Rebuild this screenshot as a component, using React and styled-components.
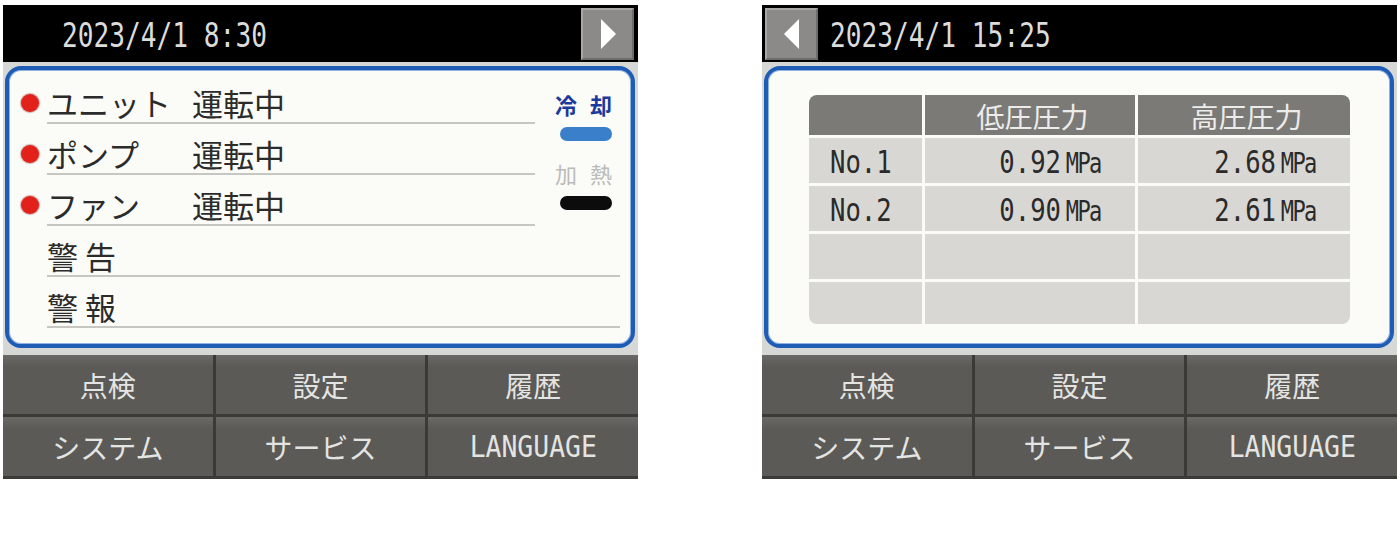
import React from "react";
import styled, { createGlobalStyle } from "styled-components";

const JP = `"Noto Sans CJK JP", "Noto Sans", sans-serif`;
const MONO = `"DejaVu Sans Mono", "Liberation Mono", monospace`;

const GlobalStyle = createGlobalStyle`
  body {
    margin: 0;
    background: #ffffff;
    font-family: ${JP};
  }
`;

const STATUS = [
  { name: "ユニット", state: "運転中" },
  { name: "ポンプ", state: "運転中" },
  { name: "ファン", state: "運転中" },
];

const ALERTS = ["警 告", "警 報"];

const PRESSURES = [
  { no: "No.1", low: "0.92", high: "2.68" },
  { no: "No.2", low: "0.90", high: "2.61" },
  null,
  null,
];

const MENU = ["点検", "設定", "履歴", "システム", "サービス"];

const Mono = ({ children, size = 34, scale = 0.77, origin = "left center" }) => (
  <MonoText $size={size} $scale={scale} $origin={origin}>
    {children}
  </MonoText>
);

const NavArrow = ({ dir }) => (
  <NavButton>
    <svg width="20" height="32" viewBox="0 0 20 32">
      {dir === "right" ? (
        <polygon points="3,1 18,16 3,31" fill="#ffffff" />
      ) : (
        <polygon points="17,1 2,16 17,31" fill="#ffffff" />
      )}
    </svg>
  </NavButton>
);

const Pressure = ({ value }) => (
  <Mono size={32} scale={0.8} origin="right center">
    {value}
    <Unit>MPa</Unit>
  </Mono>
);

const MenuGrid = () => (
  <Menu>
    {MENU.map((label) => (
      <MenuButton key={label}>{label}</MenuButton>
    ))}
    <MenuButton>
      <Mono size={30} scale={0.88} origin="center">
        LANGUAGE
      </Mono>
    </MenuButton>
  </Menu>
);

const StatusScreen = () => (
  <Screen>
    <TopBar>
      <DateSlot $pad={59}>
        <Mono>2023/4/1 8:30</Mono>
      </DateSlot>
      <NavArrow dir="right" />
    </TopBar>
    <Panel>
      <StatusGrid>
        {STATUS.map((row) => (
          <ListRow key={row.name}>
            <Dot />
            <Label>
              <Name>{row.name}</Name>
              <span>{row.state}</span>
            </Label>
          </ListRow>
        ))}
        <ModeColumn>
          <ModeLabel $active>
            <span>冷</span>
            <span>却</span>
          </ModeLabel>
          <Pill $color="#3a7fc9" $top={11} />
          <ModeLabel>
            <span>加</span>
            <span>熱</span>
          </ModeLabel>
          <Pill $color="#0c0c0c" $top={11} />
        </ModeColumn>
        {ALERTS.map((label) => (
          <AlertRow key={label}>
            <Label>{label}</Label>
          </AlertRow>
        ))}
      </StatusGrid>
    </Panel>
    <MenuGrid />
  </Screen>
);

const PressureScreen = () => (
  <Screen>
    <TopBar>
      <NavArrow dir="left" />
      <DateSlot $pad={8}>
        <Mono>2023/4/1 15:25</Mono>
      </DateSlot>
    </TopBar>
    <Panel>
      <Table>
        <HeadCell />
        <HeadCell>低圧圧力</HeadCell>
        <HeadCell>高圧圧力</HeadCell>
        {PRESSURES.map((row, i) => (
          <React.Fragment key={i}>
            <Cell $align="left">
              {row && (
                <Mono size={32} scale={0.8}>
                  {row.no}
                </Mono>
              )}
            </Cell>
            <Cell $align="right">{row && <Pressure value={row.low} />}</Cell>
            <Cell $align="right">{row && <Pressure value={row.high} />}</Cell>
          </React.Fragment>
        ))}
      </Table>
    </Panel>
    <MenuGrid />
  </Screen>
);

const App = () => (
  <>
    <GlobalStyle />
    <Page>
      <StatusScreen />
      <PressureScreen />
    </Page>
  </>
);

const Page = styled.div`
  display: flex;
  gap: 124px;
  padding: 5px 0 0 3px;
`;

const Screen = styled.div`
  width: 635px;
  display: flex;
  flex-direction: column;
  background: #d6d8d6;
`;

const TopBar = styled.div`
  height: 57px;
  display: flex;
  align-items: center;
  background: #000000;
`;

const DateSlot = styled.div`
  flex: 1;
  padding-left: ${(p) => p.$pad}px;
  color: #dcdcdc;
  line-height: 1;
  padding-top: 2px;
`;

const MonoText = styled.span`
  display: inline-block;
  font-family: ${MONO};
  font-size: ${(p) => p.$size}px;
  line-height: 1;
  white-space: pre;
  transform: scaleX(${(p) => p.$scale});
  transform-origin: ${(p) => p.$origin};
`;

const Unit = styled.span`
  margin-left: 6px;
  font-size: 0.86em;
  letter-spacing: -2px;
`;

const NavButton = styled.div`
  width: 53px;
  height: 52px;
  margin: 1px 4px 0 3px;
  box-sizing: border-box;
  display: flex;
  align-items: center;
  justify-content: center;
  background: #8b8a88;
  border: 2px solid #a9a8a5;
  border-right-color: #6e6d6b;
  border-bottom-color: #6e6d6b;
`;

const Panel = styled.div`
  height: 282px;
  box-sizing: border-box;
  margin: 4px 3px 0 2px;
  border: 4px solid #1f5cb6;
  border-radius: 16px;
  background: #fbfbf7;
  box-shadow: inset 0 0 0 1px #8fb2e2;
`;

const StatusGrid = styled.div`
  display: grid;
  grid-template-columns: 515px 85px;
  padding: 3px 11px 0 11px;
`;

const ListRow = styled.div`
  grid-column: 1;
  display: grid;
  grid-template-columns: 27px 1fr;
`;

const AlertRow = styled(ListRow)`
  grid-column: 1 / span 2;
  & > * {
    grid-column: 2;
  }
`;

const Dot = styled.div`
  width: 18px;
  height: 18px;
  margin-top: 21px;
  margin-left: 1px;
  border-radius: 50%;
  background: #e3211b;
  box-shadow: 0 0 1px 1px rgba(120, 30, 20, 0.35);
`;

const Label = styled.div`
  display: flex;
  height: 51px;
  box-sizing: border-box;
  padding-top: 12px;
  line-height: 36px;
  font-size: 31px;
  color: #2b2b2b;
  white-space: pre;
  border-bottom: 2px solid #c6c6c2;
`;

const Name = styled.span`
  width: 145px;
`;

const ModeColumn = styled.div`
  grid-column: 2;
  grid-row: 1 / span 3;
  display: flex;
  flex-direction: column;
  align-items: flex-end;
  padding: 19px 8px 0 0;
`;

const ModeLabel = styled.div`
  width: 57px;
  margin-top: ${(p) => (p.$active ? 0 : 20)}px;
  display: flex;
  justify-content: space-between;
  font-size: 22px;
  line-height: 24px;
  font-weight: ${(p) => (p.$active ? 700 : 400)};
  color: ${(p) => (p.$active ? "#1c3a9b" : "#bbbbb8")};
`;

const Pill = styled.div`
  width: 52px;
  height: 14px;
  margin-top: ${(p) => p.$top}px;
  border-radius: 7px;
  background: ${(p) => p.$color};
`;

const Table = styled.div`
  display: grid;
  grid-template-columns: 113px 210px 212px;
  grid-template-rows: 40px 45px 45px 45px 42px;
  gap: 3px;
  width: 541px;
  margin: 25px auto 0;
  border-radius: 8px;
  overflow: hidden;
`;

const HeadCell = styled.div`
  display: flex;
  align-items: flex-end;
  justify-content: center;
  padding: 0 0 3px 6px;
  background: #7b7a77;
  color: #ececea;
  font-size: 28px;
  line-height: 32px;
`;

const Cell = styled.div`
  display: flex;
  align-items: center;
  justify-content: ${(p) => (p.$align === "right" ? "flex-end" : "flex-start")};
  padding: 2px ${(p) => (p.$align === "right" ? 34 : 0)}px 0 ${(p) => (p.$align === "left" ? 21 : 0)}px;
  background: #d9d7d3;
  color: #2a2a2a;
`;

const Menu = styled.div`
  display: grid;
  grid-template-columns: repeat(3, 1fr);
  grid-auto-rows: 59px;
  gap: 3px;
  margin-top: 7px;
  padding-bottom: 3px;
  background: #3b3a37;
`;

const MenuButton = styled.div`
  display: flex;
  align-items: center;
  justify-content: center;
  background: linear-gradient(#6a6965, #5b5a56 20%, #5b5a56);
  color: #e4e4e2;
  font-size: 28px;
  line-height: 1;
`;

export default App;
